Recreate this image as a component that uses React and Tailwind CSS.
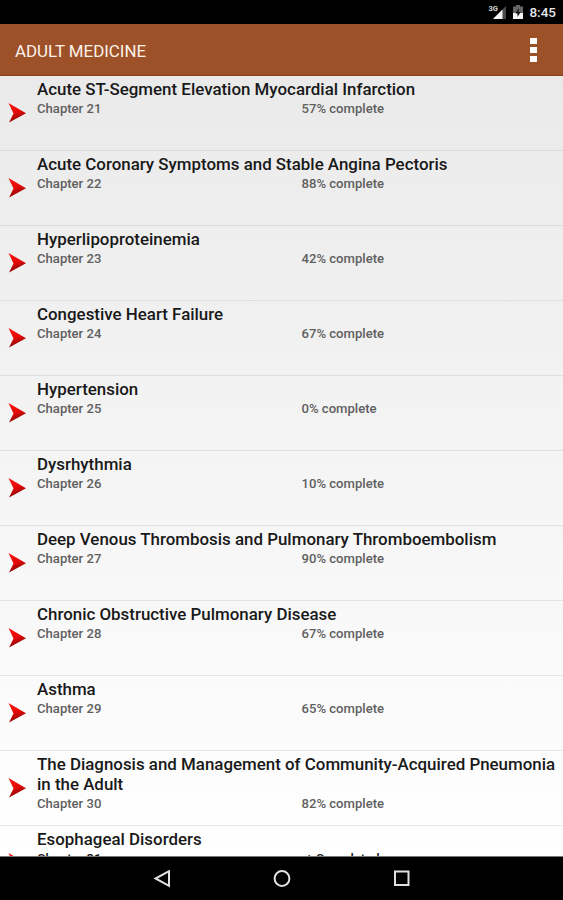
import React from "react";

const chapters = [
  { id: 21, title: "Acute ST-Segment Elevation Myocardial Infarction", status: "57% complete" },
  { id: 22, title: "Acute Coronary Symptoms and Stable Angina Pectoris", status: "88% complete" },
  { id: 23, title: "Hyperlipoproteinemia", status: "42% complete" },
  { id: 24, title: "Congestive Heart Failure", status: "67% complete" },
  { id: 25, title: "Hypertension", status: "0% complete" },
  { id: 26, title: "Dysrhythmia", status: "10% complete" },
  { id: 27, title: "Deep Venous Thrombosis and Pulmonary Thromboembolism", status: "90% complete" },
  { id: 28, title: "Chronic Obstructive Pulmonary Disease", status: "67% complete" },
  { id: 29, title: "Asthma", status: "65% complete" },
  {
    id: 30,
    title: "The Diagnosis and Management of Community-Acquired Pneumonia in the Adult",
    status: "82% complete",
  },
  { id: 31, title: "Esophageal Disorders", status: "✓ Completed", done: true },
];

const StatusBar = () => (
  <div className="flex h-6 shrink-0 items-center justify-end bg-black pr-[7px] text-white">
    <svg width="19" height="16" viewBox="0 0 19 16" className="mr-[6px]">
      <path d="M18 2v13H5z" fill="#4a4a4a" />
      <path d="M14.5 5.5V15H5z" fill="#f5f5f5" />
      <text x="0.5" y="7" fontSize="7.5" fontWeight="700" fill="#d5d5d5" fontFamily="Roboto, sans-serif">
        3G
      </text>
    </svg>
    <svg width="10" height="14" viewBox="0 0 10 14" className="mr-[6px]">
      <path d="M3 0h4v1.5h3V14H0V1.5h3z" fill="#666" />
      <path d="M0 8h10v6H0z" fill="#f5f5f5" />
      <path d="M5.7 3 2.5 8.5h2V12l3.2-5h-2z" fill="#111" />
    </svg>
    <span className="text-[13.5px] leading-6 font-medium text-gray-200">8:45</span>
  </div>
);

const ActionBar = () => (
  <div className="flex h-[52px] shrink-0 items-center justify-between border-b border-[#8b3d14] bg-[#9c5128] pr-[26px] pl-[15px]">
    <h1 className="pt-[2px] text-[16.9px] leading-6 font-normal text-[#fdf1ea]">ADULT MEDICINE</h1>
    <div className="flex flex-col gap-[3px]">
      <span className="h-[6px] w-[7px] bg-white" />
      <span className="h-[6px] w-[7px] bg-white" />
      <span className="h-[6px] w-[7px] bg-white" />
    </div>
  </div>
);

const Arrow = () => (
  <svg width="20" height="22" viewBox="0 0 20 22" className="mt-[26px] ml-[7px] shrink-0">
    <defs>
      <linearGradient id="arrow" x1="0" y1="0" x2="0.3" y2="1">
        <stop offset="0.2" stopColor="#f8100c" />
        <stop offset="0.6" stopColor="#e00808" />
        <stop offset="1" stopColor="#7d0606" />
      </linearGradient>
    </defs>
    <path d="M1.5 1 19 11.2 2 20.5 6.5 11.5z" fill="url(#arrow)" />
  </svg>
);

const ChapterRow = ({ chapter }) => (
  <li className="flex h-[75px] shrink-0 border-b border-black/8">
    <Arrow />
    <div className="min-w-0 grow pt-[3px] pl-[10px]">
      <h2 className="text-[16.9px] leading-5 font-medium text-[#191919]">{chapter.title}</h2>
      <div
        className={`flex text-[13.1px] leading-5 font-medium ${
          chapter.done ? "text-[#191919]" : "text-[#606060]"
        }`}
      >
        <span className="w-[264.5px]">Chapter {chapter.id}</span>
        <span>{chapter.status}</span>
      </div>
    </div>
  </li>
);

const NavBar = () => (
  <div className="flex h-11 shrink-0 items-center justify-center gap-[102px] border-t border-[#777] bg-black">
    <svg width="18" height="18" viewBox="0 0 18 18" fill="none" stroke="#e0e0e0" strokeWidth="2">
      <path d="M16 1.2v14.6L2.5 8.5z" />
    </svg>
    <svg width="18" height="18" viewBox="0 0 18 18" fill="none" stroke="#e0e0e0" strokeWidth="2">
      <circle cx="9" cy="8.5" r="7.4" />
    </svg>
    <svg width="18" height="18" viewBox="0 0 18 18" fill="none" stroke="#e0e0e0" strokeWidth="2">
      <rect x="2" y="1.5" width="13.5" height="13.5" />
    </svg>
  </div>
);

const App = () => {
  return (
    <div className="flex h-[900px] w-[563px] flex-col overflow-hidden font-['Roboto','DejaVu_Sans',sans-serif]">
      <StatusBar />
      <ActionBar />
      <ul className="flex min-h-0 grow flex-col overflow-hidden bg-linear-to-b from-[#eaeaea] to-white">
        {chapters.map((chapter) => (
          <ChapterRow key={chapter.id} chapter={chapter} />
        ))}
      </ul>
      <NavBar />
    </div>
  );
};

export default App;
